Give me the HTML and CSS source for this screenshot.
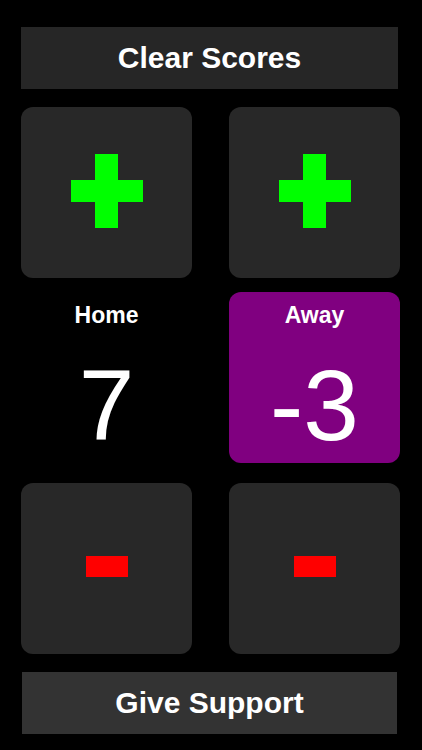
FILE: index.html
```html
<!DOCTYPE html>
<html lang="en">
<head>
    <meta charset="UTF-8">
    <meta name="viewport" content="width=device-width, initial-scale=1.0">
    <title>Scoreboard</title>
    <link rel="stylesheet" href="styles.css">
</head>
<body>
    <div class="container">
        <button class="bar bar-top">Clear Scores</button>

        <div class="board">
            <button class="tile">
                <svg width="72" height="74" viewBox="0 0 72 74">
                    <rect x="24" y="0" width="23" height="74" fill="#00ff00"/>
                    <rect x="0" y="26" width="72" height="22" fill="#00ff00"/>
                </svg>
            </button>
            <button class="tile">
                <svg width="72" height="74" viewBox="0 0 72 74">
                    <rect x="24" y="0" width="23" height="74" fill="#00ff00"/>
                    <rect x="0" y="26" width="72" height="22" fill="#00ff00"/>
                </svg>
            </button>

            <div class="score">
                <div class="team">Home</div>
                <div class="points">7</div>
            </div>
            <div class="score active">
                <div class="team">Away</div>
                <div class="points">-3</div>
            </div>

            <button class="tile tile-minus">
                <span class="minus"></span>
            </button>
            <button class="tile tile-minus">
                <span class="minus"></span>
            </button>
        </div>

        <button class="bar bar-bottom">Give Support</button>
    </div>
</body>
</html>
```
FILE: styles.css
```css
body {
    margin: 0;
    padding: 0;
    background-color: #000;
    font-family: "Liberation Sans", Arial, sans-serif;
    color: #fff;
}
.container {
    width: 422px;
    height: 750px;
    padding: 27px 0 0 21px;
    box-sizing: border-box;
}
.bar {
    display: block;
    height: 62px;
    border: none;
    padding: 0;
    color: #fff;
    font-family: inherit;
    font-size: 30px;
    font-weight: bold;
    cursor: pointer;
}
.bar-top {
    width: 377px;
    background-color: #262626;
}
.bar-bottom {
    width: 375px;
    margin-left: 1px;
    background-color: #333333;
}
.board {
    display: grid;
    grid-template-columns: 171px 171px;
    column-gap: 37px;
    margin: 18px 0;
}
.tile {
    display: flex;
    align-items: center;
    justify-content: center;
    height: 171px;
    background-color: #282828;
    border: none;
    border-radius: 12px;
    padding: 0 0 4px 0;
    cursor: pointer;
}
.tile svg {
    display: block;
}
.tile-minus {
    margin-top: 20px;
}
.minus {
    display: block;
    width: 42px;
    height: 21px;
    background-color: #ff0000;
}
.score {
    margin-top: 14px;
    height: 171px;
    border-radius: 12px;
    text-align: center;
    box-sizing: border-box;
    padding-top: 10px;
}
.score.active {
    background-color: #800080;
}
.team {
    font-size: 23px;
    font-weight: bold;
    line-height: 26px;
}
.points {
    font-size: 100px;
    line-height: 100px;
    margin-top: 27px;
}
```
